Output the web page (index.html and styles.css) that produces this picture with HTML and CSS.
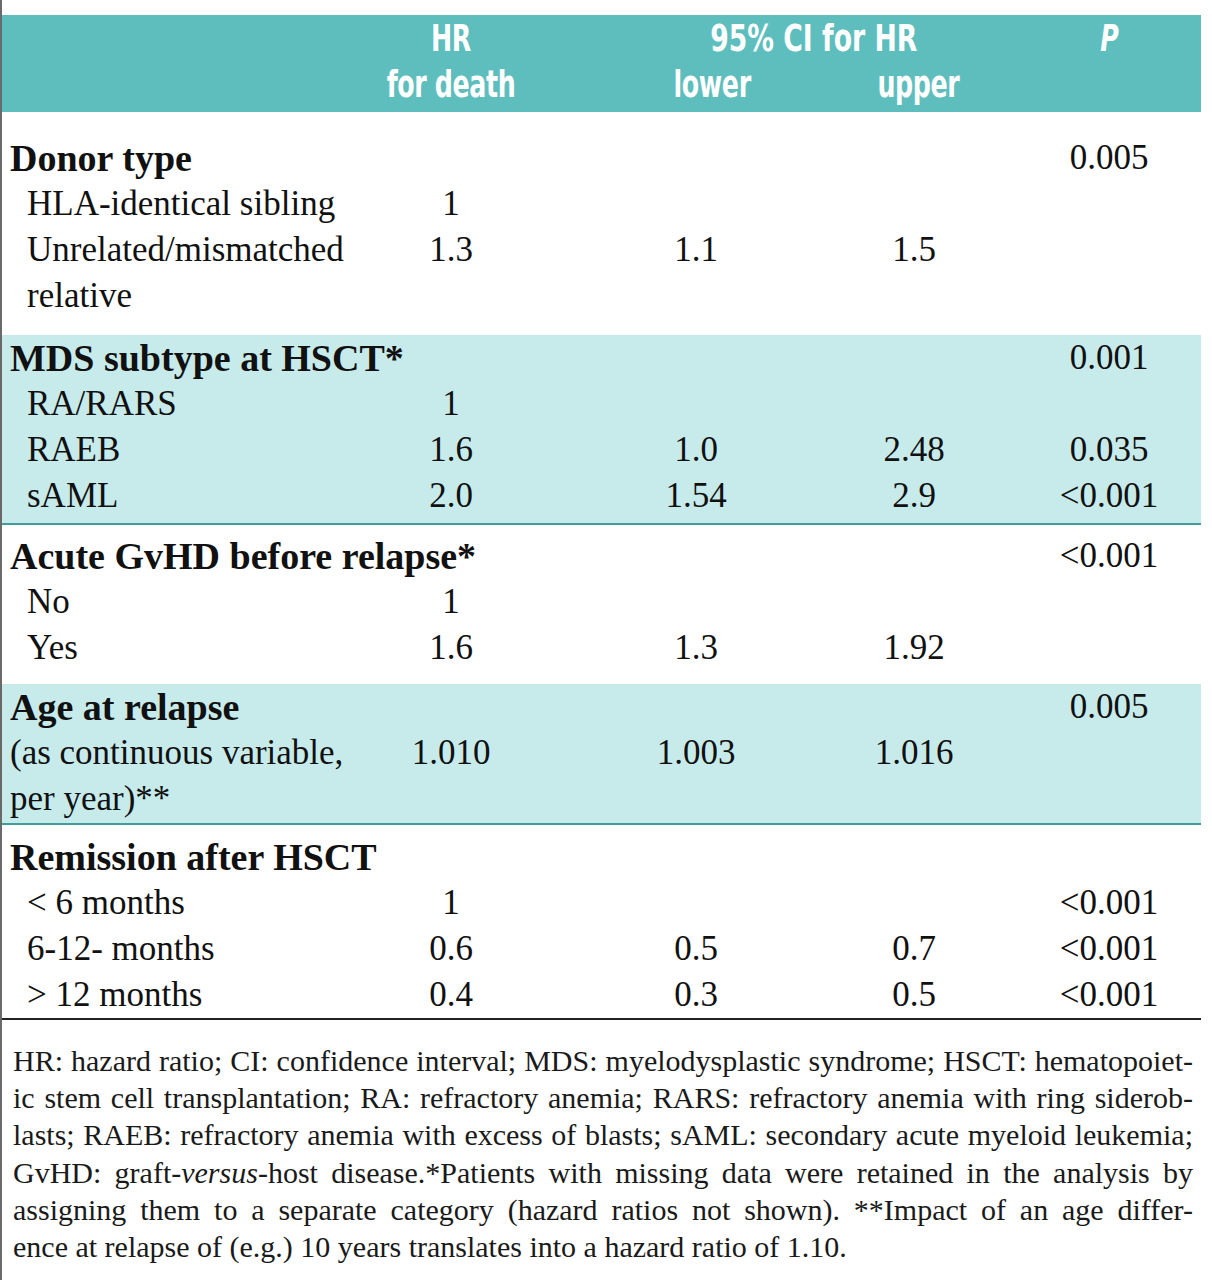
FILE: index.html
```html
<!DOCTYPE html>
<html lang="en">
<head>
<meta charset="utf-8">
<title>Hazard ratios for death</title>
<link rel="stylesheet" href="styles.css">
</head>
<body>
<div class="page">
  <div class="thead">
    <div class="h hr"><span class="sq">HR</span><br><span class="sq">for death</span></div>
    <div class="h ci"><span class="sq">95% CI for HR</span></div>
    <div class="h lo"><span class="sq">lower</span></div>
    <div class="h up"><span class="sq">upper</span></div>
    <div class="h p"><span class="sq"><i>P</i></span></div>
  </div>

  <div class="group g1">
    <div class="row"><div class="lab head">Donor type</div><div class="c pv">0.005</div></div>
    <div class="row"><div class="lab sub">HLA-identical sibling</div><div class="c">1</div><div></div><div></div><div></div></div>
    <div class="row"><div class="lab sub">Unrelated/mismatched</div><div class="c">1.3</div><div class="c">1.1</div><div class="c">1.5</div><div></div></div>
    <div class="row"><div class="lab sub">relative</div><div></div><div></div><div></div><div></div></div>
  </div>

  <div class="group g2 tint">
    <div class="row"><div class="lab head">MDS subtype at HSCT*</div><div class="c pv">0.001</div></div>
    <div class="row"><div class="lab sub">RA/RARS</div><div class="c">1</div><div></div><div></div><div></div></div>
    <div class="row"><div class="lab sub">RAEB</div><div class="c">1.6</div><div class="c">1.0</div><div class="c">2.48</div><div class="c">0.035</div></div>
    <div class="row"><div class="lab sub">sAML</div><div class="c">2.0</div><div class="c">1.54</div><div class="c">2.9</div><div class="c">&lt;0.001</div></div>
  </div>

  <div class="group g3">
    <div class="row"><div class="lab head">Acute GvHD before relapse*</div><div class="c pv">&lt;0.001</div></div>
    <div class="row"><div class="lab sub">No</div><div class="c">1</div><div></div><div></div><div></div></div>
    <div class="row"><div class="lab sub">Yes</div><div class="c">1.6</div><div class="c">1.3</div><div class="c">1.92</div><div></div></div>
  </div>

  <div class="group g4 tint">
    <div class="row"><div class="lab head">Age at relapse</div><div class="c pv">0.005</div></div>
    <div class="row"><div class="lab">(as continuous variable,</div><div class="c">1.010</div><div class="c">1.003</div><div class="c">1.016</div><div></div></div>
    <div class="row"><div class="lab">per year)**</div><div></div><div></div><div></div><div></div></div>
  </div>

  <div class="group g5">
    <div class="row"><div class="lab head">Remission after HSCT</div></div>
    <div class="row"><div class="lab sub">&lt; 6 months</div><div class="c">1</div><div></div><div></div><div class="c">&lt;0.001</div></div>
    <div class="row"><div class="lab sub">6-12- months</div><div class="c">0.6</div><div class="c">0.5</div><div class="c">0.7</div><div class="c">&lt;0.001</div></div>
    <div class="row"><div class="lab sub">&gt; 12 months</div><div class="c">0.4</div><div class="c">0.3</div><div class="c">0.5</div><div class="c">&lt;0.001</div></div>
  </div>

  <div class="notes">
    <span class="ln">HR: hazard ratio; CI: confidence interval; MDS: myelodysplastic syndrome; HSCT: hematopoiet-</span>
    <span class="ln">ic stem cell transplantation; RA: refractory anemia; RARS: refractory anemia with ring siderob-</span>
    <span class="ln">lasts; RAEB: refractory anemia with excess of blasts; sAML: secondary acute myeloid leukemia;</span>
    <span class="ln">GvHD: graft-<i>versus</i>-host disease.*Patients with missing data were retained in the analysis by</span>
    <span class="ln">assigning them to a separate category (hazard ratios not shown). **Impact of an age differ-</span>
    <span class="ln last">ence at relapse of (e.g.) 10 years translates into a hazard ratio of 1.10.</span>
  </div>
</div>
</body>
</html>
```

FILE: styles.css
```css
html, body {
  margin: 0;
  padding: 0;
  background: #ffffff;
}

.page {
  width: 1201px;
  min-height: 1280px;
  border-left: 2px solid #6a6a6a;
  padding-top: 15px;
  box-sizing: border-box;
  font-family: "Liberation Serif", "Times New Roman", serif;
  color: #111111;
}

.thead,
.row {
  display: grid;
  grid-template-columns: 320px 258px 232px 204px 186px;
}

.thead {
  background: #5ebebd;
  grid-template-rows: 46px 46px;
  padding-bottom: 5px;
  color: #ffffff;
  font-family: "DejaVu Sans Condensed", "DejaVu Sans", "Liberation Sans", sans-serif;
  font-weight: bold;
  font-size: 38px;
  line-height: 46px;
}

.h {
  text-align: center;
  white-space: nowrap;
}

.sq {
  display: inline-block;
  transform: scaleX(0.74);
  transform-origin: 50% 50%;
  letter-spacing: -0.5px;
}

.ci .sq {
  letter-spacing: 0;
  transform: scaleX(0.78);
}

.hr {
  grid-column: 2;
  grid-row: 1 / span 2;
}

.ci {
  grid-column: 3 / span 2;
  grid-row: 1;
  padding-left: 32px;
}

.lo {
  grid-column: 3;
  grid-row: 2;
  padding-left: 32px;
}

.up {
  grid-column: 4;
  grid-row: 2;
  padding-left: 8px;
}

.p {
  grid-column: 5;
  grid-row: 1;
}

.group {
  font-size: 35px;
  line-height: 46px;
}

.tint {
  background: #c7ebeb;
}

.g1 {
  padding: 23px 0 16px;
}

.g2 {
  padding: 0 0 4px;
  border-bottom: 2px solid #3f9d9c;
}

.g3 {
  padding: 8px 0 13px;
}

.g4 {
  padding: 0 0 1px;
  border-bottom: 2px solid #3f9d9c;
}

.g5 {
  padding: 9px 0 0;
  border-bottom: 2px solid #222222;
}

.lab {
  white-space: nowrap;
  padding-left: 8px;
}

.lab.sub {
  padding-left: 25px;
}

.lab.head {
  font-weight: bold;
  font-size: 38px;
  grid-column: 1 / span 4;
}

.c {
  text-align: center;
  white-space: nowrap;
}

.pv {
  grid-column: 5;
}

.notes {
  padding: 22px 8px 0 11px;
  font-size: 30px;
  line-height: 37.2px;
  color: #1a1a1a;
}

.ln {
  display: block;
  text-align: justify;
  text-align-last: justify;
}

.ln.last {
  text-align-last: left;
}
```
